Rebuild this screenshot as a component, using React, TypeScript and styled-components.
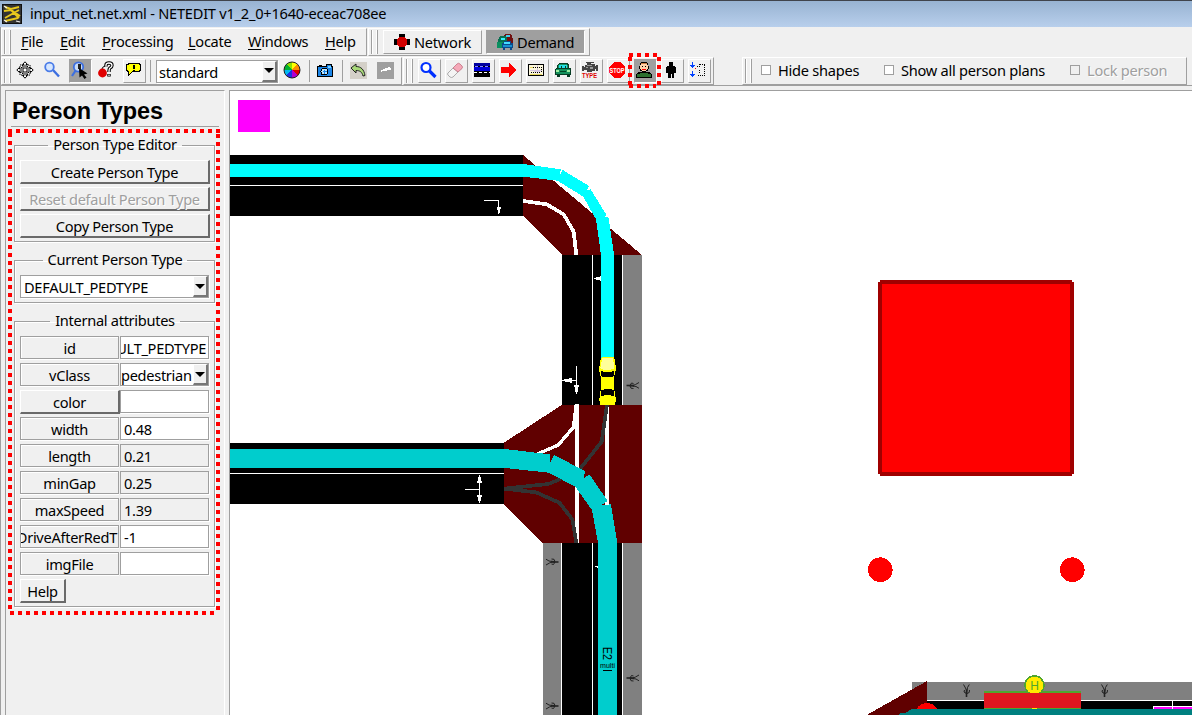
import React from 'react';
import styled, { createGlobalStyle, css } from 'styled-components';

const GRAY = '#9f9f9f';
const BG = '#f0f0f0';

const Global = createGlobalStyle`
  * { box-sizing: border-box; }
  body { margin: 0; background: ${BG}; overflow: hidden; }
`;

const Window = styled.div`
  width: 1192px;
  height: 715px;
  display: flex;
  flex-direction: column;
  background: ${BG};
  color: #000;
  font: 14.6px/18px 'Noto Sans', 'Open Sans', sans-serif;
  letter-spacing: -0.3px;
  white-space: nowrap;
  overflow: hidden;
`;

const TitleBar = styled.header`
  height: 27px;
  flex: none;
  display: flex;
  align-items: center;
  gap: 8px;
  padding: 0 0 0 2px;
  border-top: 1px solid #40444c;
  background: linear-gradient(#98b3d2, #b8cfec);
`;

const TitleText = styled.span`
  padding-bottom: 2px;
  letter-spacing: -0.23px;
`;

const Body = styled.div`
  flex: 1;
  min-height: 0;
  display: flex;
  flex-direction: column;
  border-left: 1px solid ${GRAY};
`;

const DockRow = styled.div<{ $line?: boolean }>`
  display: flex;
  flex: none;
  height: ${p => (p.$line ? 30 : 29)}px;
  padding-top: 1px;
  border-bottom: ${p => (p.$line ? `1px solid ${GRAY}` : 'none')};
`;

const Dock = styled.div<{ $w: number; $ml?: number }>`
  width: ${p => p.$w}px;
  margin-left: ${p => p.$ml ?? 0}px;
  height: 28px;
  display: flex;
  align-items: center;
  border: 1px solid;
  border-color: #fff ${GRAY} ${GRAY} #fff;
`;

const Grip = styled.div<{ $gap: number }>`
  width: 7px;
  height: 24px;
  flex: none;
  margin: 0 ${p => p.$gap}px 0 2px;
  border: solid ${GRAY};
  border-width: 0 1px;
  background: linear-gradient(90deg, #fff 1px, ${BG} 1px 4px, #fff 4px);
`;

const MenuItem = styled.span<{ $w: number }>`
  width: ${p => p.$w}px;
  flex: none;
  padding-bottom: 2px;
  u { text-underline-offset: 2px; text-decoration-thickness: 1px; }
`;

const ModeTab = styled.button<{ $active?: boolean }>`
  width: 100px;
  height: 24px;
  padding: 0 0 1px 9px;
  margin-right: 4px;
  display: flex;
  align-items: center;
  gap: 3px;
  font: inherit;
  letter-spacing: -0.25px;
  color: #000;
  background: ${p => (p.$active ? GRAY : BG)};
  border: 1px solid;
  border-color: ${p => (p.$active ? `${GRAY} #fff #fff ${GRAY}` : `#fff ${GRAY} ${GRAY} #fff`)};
`;

const ToolButton = styled.button<{ $look?: 'raised' | 'flat' | 'pressed' }>`
  width: 23px;
  height: 24px;
  margin-right: 4px;
  padding: 1px 0 0 0;
  flex: none;
  display: flex;
  align-items: flex-start;
  justify-content: flex-start;
  background: ${p => (p.$look === 'pressed' ? GRAY : BG)};
  border: 1px solid;
  border-color: ${p =>
    p.$look === 'flat' ? 'transparent' : p.$look === 'pressed' ? `${GRAY} #fff #fff ${GRAY}` : `#fff ${GRAY} ${GRAY} #fff`};
`;

const Separator = styled.i`
  width: 1px;
  height: 22px;
  flex: none;
  background: ${GRAY};
  margin: 0 5px 0 0;
`;

const Combo = styled.div<{ $w: number; $pad?: number; $mr?: number }>`
  width: ${p => p.$w}px;
  height: 23px;
  flex: none;
  display: flex;
  align-items: stretch;
  justify-content: space-between;
  overflow: hidden;
  margin-right: ${p => p.$mr ?? 0}px;
  padding-left: ${p => p.$pad ?? 3}px;
  background: #fff;
  border: 1px solid ${GRAY};
  box-shadow: 1px 1px 0 #fff;
  span { padding-top: 2px; }
`;

const DropArrow = styled.div`
  width: 15px;
  flex: none;
  display: flex;
  align-items: center;
  justify-content: center;
  background: ${BG};
  border: solid;
  border-width: 1px 2px 2px 1px;
  border-color: #fff #777 #777 #fff;
  &::after {
    content: '';
    border: 5px solid transparent;
    border-top-color: #000;
    border-bottom: 0;
  }
`;

const Option = styled.label<{ $off?: boolean; $w: number }>`
  width: ${p => p.$w}px;
  flex: none;
  display: flex;
  align-items: center;
  gap: 7px;
  padding-bottom: 2px;
  letter-spacing: -0.25px;
  color: ${p => (p.$off ? GRAY : '#000')};
  text-shadow: ${p => (p.$off ? '1px 1px 0 #fff' : 'none')};
  i {
    width: 10px;
    height: 10px;
    border: 1px solid ${GRAY};
    background: ${p => (p.$off ? BG : '#fff')};
  }
`;

const Main = styled.main`
  flex: 1;
  min-height: 0;
  display: flex;
  gap: 4px;
  padding: 4px 0 0 4px;
`;

const Sidebar = styled.aside`
  position: relative;
  width: 220px;
  flex: none;
  padding: 0 9px 0 8px;
  border: solid;
  border-width: 1px 1px 0 1px;
  border-color: ${GRAY} #fff ${GRAY} ${GRAY};
`;

const Heading = styled.h1`
  margin: 0 -4px 0 -3px;
  height: 36px;
  padding: 0 0 0 1px;
  border-bottom: 1px solid ${GRAY};
  font: bold 23.5px/40px 'Liberation Sans', Arial, sans-serif;
  letter-spacing: -0.12px;
`;

const Group = styled.fieldset<{ $mt: number; $h: number }>`
  margin: ${p => p.$mt}px 0 0;
  height: ${p => p.$h}px;
  width: 201px;
  min-width: 0;
  padding: 0 4px 0 5px;
  border: 1px solid ${GRAY};
  box-shadow: 1px 1px 0 #fff, inset 1px 1px 0 #fff;
  legend {
    height: 18px;
    line-height: 16px;
    margin: 0 auto;
    padding: 0 5px;
  }
`;

const Stack = styled.div`
  display: flex;
  flex-direction: column;
  gap: 3px;
  margin-top: 6px;
`;

const raised = css`
  background: ${BG};
  border: solid;
  border-width: 1px 2px 2px 1px;
  border-color: #fff #6a6a6a #6a6a6a #fff;
`;

const PushButton = styled.button<{ $w?: number }>`
  ${raised}
  width: ${p => p.$w ?? 190}px;
  height: 24px;
  padding: 1px 0 0;
  font: inherit;
  line-height: 17px;
  letter-spacing: inherit;
  color: #000;
  &:disabled { color: ${GRAY}; text-shadow: 1px 1px 0 #fff; }
`;

const AttrRow = styled.div`
  display: flex;
  gap: 1px;
  height: 24px;
`;

const AttrName = styled.div<{ $button?: boolean; $long?: boolean }>`
  width: 99px;
  height: 23px;
  padding: 2px 1px 0;
  display: flex;
  justify-content: ${p => (p.$long ? 'flex-end' : 'center')};
  overflow: hidden;
  border: 1px solid ${GRAY};
  box-shadow: inset 1px 1px 0 #fff, 0 1px 0 #fff;
  ${p => p.$button && css`${raised} height: 24px; width: 100px; margin-right: -1px; box-shadow: none;`}
`;

const AttrValue = styled.div<{ $locked?: boolean; $end?: boolean }>`
  width: 89px;
  height: 23px;
  padding: 2px ${p => (p.$end ? 2 : 3)}px 0;
  display: flex;
  justify-content: ${p => (p.$end ? 'flex-end' : 'flex-start')};
  overflow: hidden;
  border: 1px solid ${GRAY};
  box-shadow: 1px 1px 0 #fff;
  background: ${p => (p.$locked ? BG : '#fff')};
`;

const Highlight = styled.svg<{ $l: number; $t: number }>`
  position: absolute;
  left: ${p => p.$l}px;
  top: ${p => p.$t}px;
  pointer-events: none;
`;

const ButtonHolder = styled.div`
  position: relative;
  display: flex;
`;

const NetView = styled.div`
  flex: 1;
  border: solid ${GRAY};
  border-width: 1px 0 0 1px;
  background: #fff;
  svg { display: block; }
`;

const TinyText = styled.text<{ $s: number; $light?: boolean }>`
  font: ${p => (p.$light ? 400 : 700)} ${p => p.$s}px 'Liberation Sans', Arial, sans-serif;
  letter-spacing: 0;
`;

type IconProps = { children: React.ReactNode; s?: number };
const Icon = ({ children, s = 18 }: IconProps) => (
  <svg width={s} height={s} viewBox={`0 0 ${s} ${s}`} shapeRendering="crispEdges" fill="none">{children}</svg>
);

const AppIcon = () => (
  <Icon s={20}>
    <path fill="#333" stroke="#111" d="M.5.5h19v19H.5z" />
    <g shapeRendering="auto">
      <path d="M3 3l6 2 8-2M2 7l7-1 9 6M17 6L3 14M3 17l13-3M9 6l8 8" stroke="#e8c81c" strokeWidth="1.900" />
      <path d="M2 2l3 2M2 16l3 2M14 17l4 1" stroke="#eee" strokeWidth="1.200" />
    </g>
  </Icon>
);
const MoveIcon = () => (
  <Icon>
    <g shapeRendering="auto" stroke="#000" fill="#fff">
      <path d="M9 .8l2.500 2.700H10V8h4.500V6.500L17.200 9l-2.700 2.500V10H10v4.500h1.500L9 17.200l-2.500-2.700H8V10H3.500v1.500L.8 9l2.700-2.500V8H8V3.500H6.500z" />
      <path d="M4 4h2.500v2.500H4zM11.500 4H14v2.500h-2.500zM4 11.500h2.500V14H4zM11.500 11.500H14V14h-2.500z" strokeDasharray="1.500 1" />
    </g>
  </Icon>
);
const ZoomIcon = () => (
  <Icon>
    <g shapeRendering="auto">
      <path d="M10 9l6 6.500" stroke="#3d6fe0" strokeWidth="2.400" />
      <circle cx="6.500" cy="6" r="4.300" fill="#d5e6ff" stroke="#4a7ce8" strokeWidth="1.800" />
    </g>
  </Icon>
);
const ZoomCursorIcon = () => (
  <Icon>
    <g shapeRendering="auto">
      <path d="M6 9l-4 6" stroke="#3d6fe0" strokeWidth="2.200" />
      <circle cx="8.500" cy="6" r="4.700" fill="#c9dcf5" stroke="#3d6fe0" strokeWidth="1.800" />
      <path d="M8 3h3v5H8z" fill="#222" />
      <path d="M9 7l8.500 5.500-3.500 1 2.500 3-2 1.500-2.500-3.500-2.500 2z" fill="#000" />
    </g>
  </Icon>
);
const HelpIcon = () => (
  <Icon>
    <g shapeRendering="auto">
      <path d="M9 5.500V4q0-2 3-2t3 2.500q0 1.500-2 2.500-1 .5-1 4M12 13v2.500" stroke="#000" strokeWidth="3.400" />
      <path d="M9 5.500V4q0-2 3-2t3 2.500q0 1.500-2 2.500-1 .5-1 4M12 13.500V15" stroke="#fff" strokeWidth="1.300" />
      <path d="M5 8q0-2 3-3" stroke="#000" />
      <circle cx="5.500" cy="12" r="4.400" fill="#e00000" />
    </g>
  </Icon>
);
const TipIcon = () => (
  <Icon>
    <path d="M4.500 2.500h11v1h1v6h-1v1H8.500l-4 4v-4h-1v-1h-1v-6h2z" fill="#ff0" stroke="#000" />
    <path d="M9 4h2v4H9zM9 9h2v1H9z" fill="#000" />
  </Icon>
);
const wheel = ['#ff0', '#ff8c00', '#e00000', '#b000d0', '#2030e0', '#00b8f0', '#00b030', '#90e000'];
const WheelIcon = () => (
  <Icon>
    {wheel.map((c, i) => {
      const a = (i * Math.PI) / 4, b = ((i + 1) * Math.PI) / 4;
      return <path key={c} fill={c} d={`M9 9L${9 + 8 * Math.sin(a)} ${9 - 8 * Math.cos(a)}A8 8 0 0 1 ${9 + 8 * Math.sin(b)} ${9 - 8 * Math.cos(b)}z`} />;
    })}
    <circle cx="9" cy="9" r="8" stroke="#222" shapeRendering="auto" />
  </Icon>
);
const CameraIcon = () => (
  <Icon>
    <path d="M1.500 5.500h9v-2h5v2h1v10h-15z" fill="#1c86e8" stroke="#000" />
    <path d="M3 4h3v1H3z" fill="#000" />
    <circle cx="8.500" cy="10.500" r="3.500" fill="#bfe8ff" stroke="#000" />
    <path d="M8.500 8.500v4M7 10.500h4" stroke="#1c86e8" />
    <path d="M12 5h3v2h-3z" fill="#7fd0ff" />
  </Icon>
);
const UndoIcon = ({ off }: { off?: boolean }) => (
  <Icon>
    <path fill={off ? GRAY : '#d4d0c8'} d="M1 1h17v17H1z" />
    {off
      ? <path d="M5 9h2V8h2V7h3V6h2v1h1v2h-4v1H6v1H5z" fill="#fff" />
      : <path shapeRendering="auto" d="M2 7l5-4v2.500c5 0 8 3 9 9l-2 .5c-1-4-3-5.500-7-5.500V12z" fill="#a8d878" stroke="#222" />}
  </Icon>
);
const InspectIcon = () => (
  <Icon>
    <g shapeRendering="auto">
      <path d="M10.500 10l6 6" stroke="#0030ff" strokeWidth="3.200" />
      <circle cx="7" cy="6.500" r="4.500" fill="#fff" stroke="#0030ff" strokeWidth="2.200" />
    </g>
  </Icon>
);
const EraserIcon = () => (
  <Icon>
    <g shapeRendering="auto" strokeWidth=".8">
      <path d="M2 12l5-5 5 4-5 5q-1.500 1-3 0l-2-2q-1-1 0-2z" fill="#f4f4f4" stroke="#999" />
      <path d="M7 7l4-4q1.500-1.500 3 0l2 2q1 1 0 2.500L12 11z" fill="#f5a8b8" stroke="#c07080" />
    </g>
  </Icon>
);
const EdgeIcon = () => (
  <Icon>
    <path fill="#000" d="M1 2h16v14H1z" />
    <path fill="#0000a0" d="M1 2h16v3H1z" />
    <path fill="#0000d8" d="M1 6h16v4H1z" />
    <path stroke="#88f" strokeDasharray="3 2" d="M2 5.500h15" />
    <path stroke="#fff" strokeDasharray="3 2" d="M1 11.500h16" />
  </Icon>
);
const RouteIcon = () => <Icon><path fill="red" d="M1 6h8V2l8 7-8 7v-4H1z" /></Icon>;
const ZoneIcon = () => (
  <Icon>
    <path fill="#fbf6dc" stroke="#000" d="M1.500 3.500h15v11h-15z" />
    <path stroke="#d8c8e0" d="M7 10.500h6M10.500 4v10M3 9.500h12" />
    <path stroke="#e8d860" d="M3 6.500h3M3 13.500h12" />
    <path stroke="#000" strokeDasharray="1 1" d="M6 6.500h9M4 11.500h9M14.500 6v6" />
  </Icon>
);
const CarIcon = () => (
  <Icon>
    <path d="M5 2h9v1h1v4h2v7h-1v2h-3v-2H6v2H3v-2H1V8h1V7h1V4h1V3h1z" fill="#063c24" />
    <path d="M5 3h8v1h1v3H4V4h1zM2 8h14v5H2z" fill="#14905c" />
    <path d="M5 4h8v3H5z" fill="#22e0e8" />
    <path d="M7 5h1v2H7zM11 5h1v2h-1z" fill="#063c24" />
    <path d="M2 9h3v2H2zM13 9h3v2h-3z" fill="#9df0a0" />
    <path d="M6 10h6v1H6z" fill="#042" />
  </Icon>
);
const EngineIcon = () => (
  <Icon>
    <path d="M5 1h8v1h-3v1h4v2h1V4h2v6h-2V8h-1v2h-3v1H6V9H3v1H1V5h2v1h1V4h2V2H5z" fill="#444" />
    <path d="M6 4h5v1H6zM9 6h3v2H9zM5 6h2v1H5z" fill="#999" />
    <TinyText $s={6.500} x="1" y="17" fill="#d00" textLength="15" lengthAdjust="spacingAndGlyphs">TYPE</TinyText>
  </Icon>
);
const StopIcon = () => (
  <Icon>
    <path d="M6 1h6l5 5v6l-5 5H6l-5-5V6z" fill="red" />
    <TinyText $s={7.500} x="1.500" y="12" fill="#fff" textLength="15" lengthAdjust="spacingAndGlyphs">STOP</TinyText>
  </Icon>
);
const PersonTypeIcon = () => (
  <Icon>
    <path d="M6 1h6v1h1v3h1v3h-1v2h-2v1h4v1h1v1h1v4H1v-4h1v-1h1v-1h4v-1H5V8H4V5h1V2h1z" fill="#000" />
    <path d="M6 2h6v2h1v4h-1v1h-1v1H7V9H6V8H5V4h1z" fill="#ffd0a8" />
    <path d="M6 2h6v1H6z" fill="#c87840" />
    <path d="M7 5.500h1M10 5.500h1" stroke="#000" />
    <path d="M7 8.500h4" stroke="red" />
    <path d="M2 13h3v-1h8v1h3v3H2z" fill="#2c7030" />
  </Icon>
);
const PersonIcon = () => <Icon><path d="M7 1h4v4h2v1h1v6h-2v5H9.500v-4h-1v4H6v-5H4V6h1V5h2z" fill="#000" /></Icon>;
const PlanIcon = () => (
  <Icon>
    <path d="M3.500 1v6M1 4.500h5M2 5.500h3M3.500 10v6M1 13.500h5M2 14.500h3" stroke="#0040ff" />
    <path d="M8 5.500h2M10.500 3v3M11 3.500h5M15.500 4v11M9 14.500h7M10.500 9v3" stroke="#000" strokeDasharray="1 1" />
    <path d="M6 7.500h1" stroke="red" />
  </Icon>
);
const JunctionIcon = () => (
  <Icon>
    <path d="M6 1h6v16H6zM1 6h16v6H1z" fill="#000" />
    <circle cx="9" cy="9" r="5.500" fill="#d00000" />
  </Icon>
);
const CarsIcon = () => (
  <Icon>
    <path d="M9 1h6v1h1v3h1v5h-8V5H8V2h1z" fill="#701010" />
    <path d="M10 2h4v2h-4z" fill="#4ce" />
    <path d="M4 3h6v1h1v6H2V6h1V4h1z" fill="#087050" />
    <path d="M5 5h4v2H5z" fill="#3ef" />
    <path d="M1 9h6v6H1z" fill="#0a9060" />
    <path d="M8 8h7v2h2v5h-1v2h-2v-2H9v2H7v-2H6v-5h2z" fill="#0a4a8c" />
    <path d="M8 9h6v2H8z" fill="#4df" />
    <path d="M7 12h9v2H7z" fill="#1890d0" />
  </Icon>
);

const Walker = ({ x, y, r = 0 }: { x: number; y: number; r?: number }) => (
  <g transform={`translate(${x} ${y}) rotate(${r})`} stroke="#222" shapeRendering="auto" fill="none">
    <path d="M-6.500 0h4" strokeWidth="1.600" />
    <path d="M-3 0l4 .3" strokeWidth="1.900" />
    <path d="M0 0l2.500-1L6 -3M0 .5l3 .5 3 1.800M-3 0l1.500-2.500 2 .5M-3 .5l1 2.200 2.500.3" strokeWidth="1" />
  </g>
);

const Network = () => (
  <svg width="962" height="624" viewBox="230 91 962 624" shapeRendering="crispEdges" fill="none">
    <path fill="#f0f" d="M238 100h32v32h-32z" />

    <path fill="#000" d="M230 155h293v61H230z" />
    <path fill="#600000" d="M523 155L642 255H562L523 216z" />
    <path fill="#fff" d="M230 185h293v1H230z" />
    <g transform="translate(470 140) scale(.33333)">
      <path fill="#000" d="M276 345h183v450H276z" />
      <path fill="#808080" d="M459 345h57v450h-57z" />
      <path stroke="#fff" strokeWidth="3" d="M367.500 345v450M457.500 345v450M42 181.500h45v24M319.500 678v60M300 721.500h20" />
      <path fill="#fff" d="M80 200h13l-5 22h-3zM312 735h15l-6 27h-3zM306 714v15l-30-6v-3zM393 409v13l-21-5v-3z" />
      <path stroke="#fff" strokeWidth="11" d="M159 183l71 10 51 30 30 52 8 70" />
      <path fill="#0ff" d="M-720 72H159L272 88l-1 14 7-12 79 48-6 14 11-4 48 78-10 6 15-2 17 112V655H393V345L378 238l-38-68-78-48-103-12H-720z" />
      <path fill="#ff0" d="M396 651h34l5 10 3 28-4 14-3 10v36l4 8 3 25-4 13h-42l-4-13 2-25 4-8v-36l-4-10-3-14 4-28z" />
      <path fill="#ffff99" d="M397 655h32l4 30-10 4h-22l-10-4z" />
      <path fill="#000" d="M392 692l10 4h20l10-4v16l-6 3h-28l-6-3zM394 751l8-3h22l8 3v18l-10-3h-18l-10 3z" />
    </g>
    <Walker x={633} y={385.500} />

    <g transform="translate(450 395) scale(.33333)">
      <path fill="#000" d="M-660 144H162v183H-660zM336 444h183v516H336z" />
      <path fill="#808080" d="M279 444h54v516h-54zM519 444h57v516h-57z" />
      <path fill="#600000" d="M162 143L335 30H576V444H278L162 327z" />
      <path stroke="#fff" strokeWidth="3" d="M-660 235.500H162M334.500 444v516M427.500 444v516M517.500 444v516M45 283.500h44M88.500 245v75" />
      <path fill="#fff" d="M87 240h3l6 24H81zM87 324h3l6-24H81zM432 513h12v6z" />
      <path stroke="#fff" strokeWidth="12" d="M381 28v416M471 30v302" />
      <path stroke="#fff" strokeWidth="10" d="M379 28l-9 69-45 53-63 27" />
      <path stroke="#333" strokeWidth="11" d="M471 30l-16 110-65 82-65 33-30 12-133 14M162 281l96 11 70 31 39 50 12 71" />
      <path fill="#00cdcd" d="M-660 162H165L299 178l1 25 12-23 93 48-4 22 17-12 55 80-18 12 28-2 18 110v522H444V444L426 345l-50-70-81-42-130-14H-660z" />
    </g>
    <Walker x={552} y={562} r={180} />
    <Walker x={552} y={706} r={180} />
    <Walker x={633} y={678} />
    <TinyText $s={12} $light fill="#000" transform="translate(603 647) rotate(90)" textLength="13" lengthAdjust="spacingAndGlyphs">E2</TinyText>
    <TinyText $s={7} $light fill="#000" x="600" y="668" textLength="15" lengthAdjust="spacingAndGlyphs">multi</TinyText>
    <path stroke="#000" d="M603 670.500h9" />

    <path fill="red" d="M880 282h192v192H880z" />
    <path stroke="#a00000" strokeWidth="4" d="M880 282h192M880 474h192M880 282v192M1072 282v192" />
    <circle cx="880.300" cy="569.700" r="12.300" fill="red" />
    <circle cx="1072.300" cy="569.700" r="12.300" fill="red" />

    <g transform="translate(850 660) scale(.33333)">
      <path fill="#808080" d="M186 66h840v54H186z" />
      <path fill="#fff" d="M231 120h795v3H231z" />
      <path fill="#000" d="M231 123h795v24H231z" />
      <path fill="#600000" d="M231 63v102H50z" />
      <circle cx="231" cy="165" r="36" fill="red" />
      <path fill="#fff" d="M909 138h117v9H909zM966 123h3v24h-3z" />
      <path fill="#f0f" d="M912 141h54v6h-54zM969 141h57v6h-57z" />
      <path fill="#008080" d="M186 147h840v18H145l8-6h12z" />
      <path fill="#4fa62f" d="M402 94h291v53H402z" />
      <circle cx="553.500" cy="76" r="31" fill="#4fa62f" />
      <circle cx="553.500" cy="76" r="26" fill="#ffeb00" />
      <path fill="#e01620" d="M402 99h291v45H402z" />
      <path fill="#ffeb00" d="M546 144h15v3h-15z" />
    </g>
    <TinyText $s={12} $light fill="#4fa62f" x="1030.200" y="690">H</TinyText>
    <Walker x={966.500} y={690.500} r={-90} />
    <Walker x={1104.500} y={690.500} r={-90} />
  </svg>
);

const menus: [string, number][] = [['File', 39], ['Edit', 42], ['Processing', 86], ['Locate', 60], ['Windows', 77], ['Help', 35]];
const demandTools = [InspectIcon, EraserIcon, EdgeIcon, RouteIcon, ZoneIcon, CarIcon, EngineIcon, StopIcon, PersonTypeIcon, PersonIcon, PlanIcon];
type Attr = { name: string; value?: string; kind?: 'combo' | 'locked' | 'end' | 'color'; long?: boolean };
const attributes: Attr[] = [
  { name: 'id', value: 'ULT_PEDTYPE', kind: 'end' },
  { name: 'vClass', value: 'pedestrian', kind: 'combo' },
  { name: 'color', kind: 'color' },
  { name: 'width', value: '0.48' },
  { name: 'length', value: '0.21', kind: 'locked' },
  { name: 'minGap', value: '0.25', kind: 'locked' },
  { name: 'maxSpeed', value: '1.39', kind: 'locked' },
  { name: 'DriveAfterRedT', value: '-1', long: true },
  { name: 'imgFile' },
];

export default function App() {
  return (
    <Window>
      <Global />
      <TitleBar>
        <AppIcon />
        <TitleText>input_net.net.xml - NETEDIT v1_2_0+1640-eceac708ee</TitleText>
      </TitleBar>
      <Body>
        <DockRow>
          <Dock $w={366}>
            <Grip $gap={10} />
            {menus.map(([m, w]) => <MenuItem key={m} $w={w}><u>{m[0]}</u>{m.slice(1)}</MenuItem>)}
          </Dock>
          <Dock $w={222} $ml={1}>
            <Grip $gap={5} />
            <ModeTab><JunctionIcon />Network</ModeTab>
            <ModeTab $active><CarsIcon />Demand</ModeTab>
          </Dock>
        </DockRow>
        <DockRow $line>
          <Dock $w={401}>
            <Grip $gap={4} />
            <ToolButton $look="flat"><MoveIcon /></ToolButton>
            <ToolButton $look="flat"><ZoomIcon /></ToolButton>
            <ToolButton $look="pressed"><ZoomCursorIcon /></ToolButton>
            <ToolButton $look="flat"><HelpIcon /></ToolButton>
            <ToolButton><TipIcon /></ToolButton>
            <Separator />
            <Combo $w={122} $pad={2} $mr={4}><span>standard</span><DropArrow /></Combo>
            <ToolButton $look="flat"><WheelIcon /></ToolButton>
            <Separator />
            <ToolButton $look="flat"><CameraIcon /></ToolButton>
            <Separator />
            <ToolButton $look="flat"><UndoIcon /></ToolButton>
            <ToolButton $look="flat"><UndoIcon off /></ToolButton>
          </Dock>
          <Dock $w={311} $ml={1}>
            <Grip $gap={5} />
            {demandTools.map((Tool, i) =>
              i === 8 ? (
                <ButtonHolder key={i}>
                  <ToolButton $look="pressed"><Tool /></ToolButton>
                  <Highlight $l={-6} $t={-6} width="33" height="36" fill="none" stroke="red" strokeWidth="4" strokeDasharray="4 4" shapeRendering="crispEdges">
                    <path d="M1 2h30M31 4v30M1 33h27M2 4v30" />
                  </Highlight>
                </ButtonHolder>
              ) : <ToolButton key={i}><Tool /></ToolButton>
            )}
          </Dock>
          <Dock $w={445} $ml={28}>
            <Grip $gap={9} />
            <Option $w={123}><i />Hide shapes</Option>
            <Option $w={186}><i />Show all person plans</Option>
            <Option $w={100} $off><i />Lock person</Option>
          </Dock>
        </DockRow>
        <Main>
          <Sidebar>
            <Heading>Person Types</Heading>
            <Group $mt={9} $h={106}>
              <legend>Person Type Editor</legend>
              <Stack>
                <PushButton>Create Person Type</PushButton>
                <PushButton disabled>Reset default Person Type</PushButton>
                <PushButton>Copy Person Type</PushButton>
              </Stack>
            </Group>
            <Group $mt={9} $h={52}>
              <legend>Current Person Type</legend>
              <Stack>
                <Combo $w={189}><span>DEFAULT_PEDTYPE</span><DropArrow /></Combo>
              </Stack>
            </Group>
            <Group $mt={9} $h={295}>
              <legend>Internal attributes</legend>
              <Stack>
                {attributes.map(a => (
                  <AttrRow key={a.name}>
                    <AttrName $button={a.kind === 'color'} $long={a.long}>{a.name}</AttrName>
                    {a.kind === 'combo'
                      ? <Combo $w={89} $pad={0}><span>{a.value}</span><DropArrow /></Combo>
                      : <AttrValue $locked={a.kind === 'locked'} $end={a.kind === 'end'}>{a.value}</AttrValue>}
                  </AttrRow>
                ))}
                <PushButton $w={46}>Help</PushButton>
              </Stack>
            </Group>
            <Highlight $l={2} $t={38} width="212" height="486" fill="none" stroke="red" strokeWidth="4" strokeDasharray="4 4" shapeRendering="crispEdges">
              <path d="M0 2h212M2 4v478M210 5v480M2 484h206" />
            </Highlight>
          </Sidebar>
          <NetView><Network /></NetView>
        </Main>
      </Body>
    </Window>
  );
}
